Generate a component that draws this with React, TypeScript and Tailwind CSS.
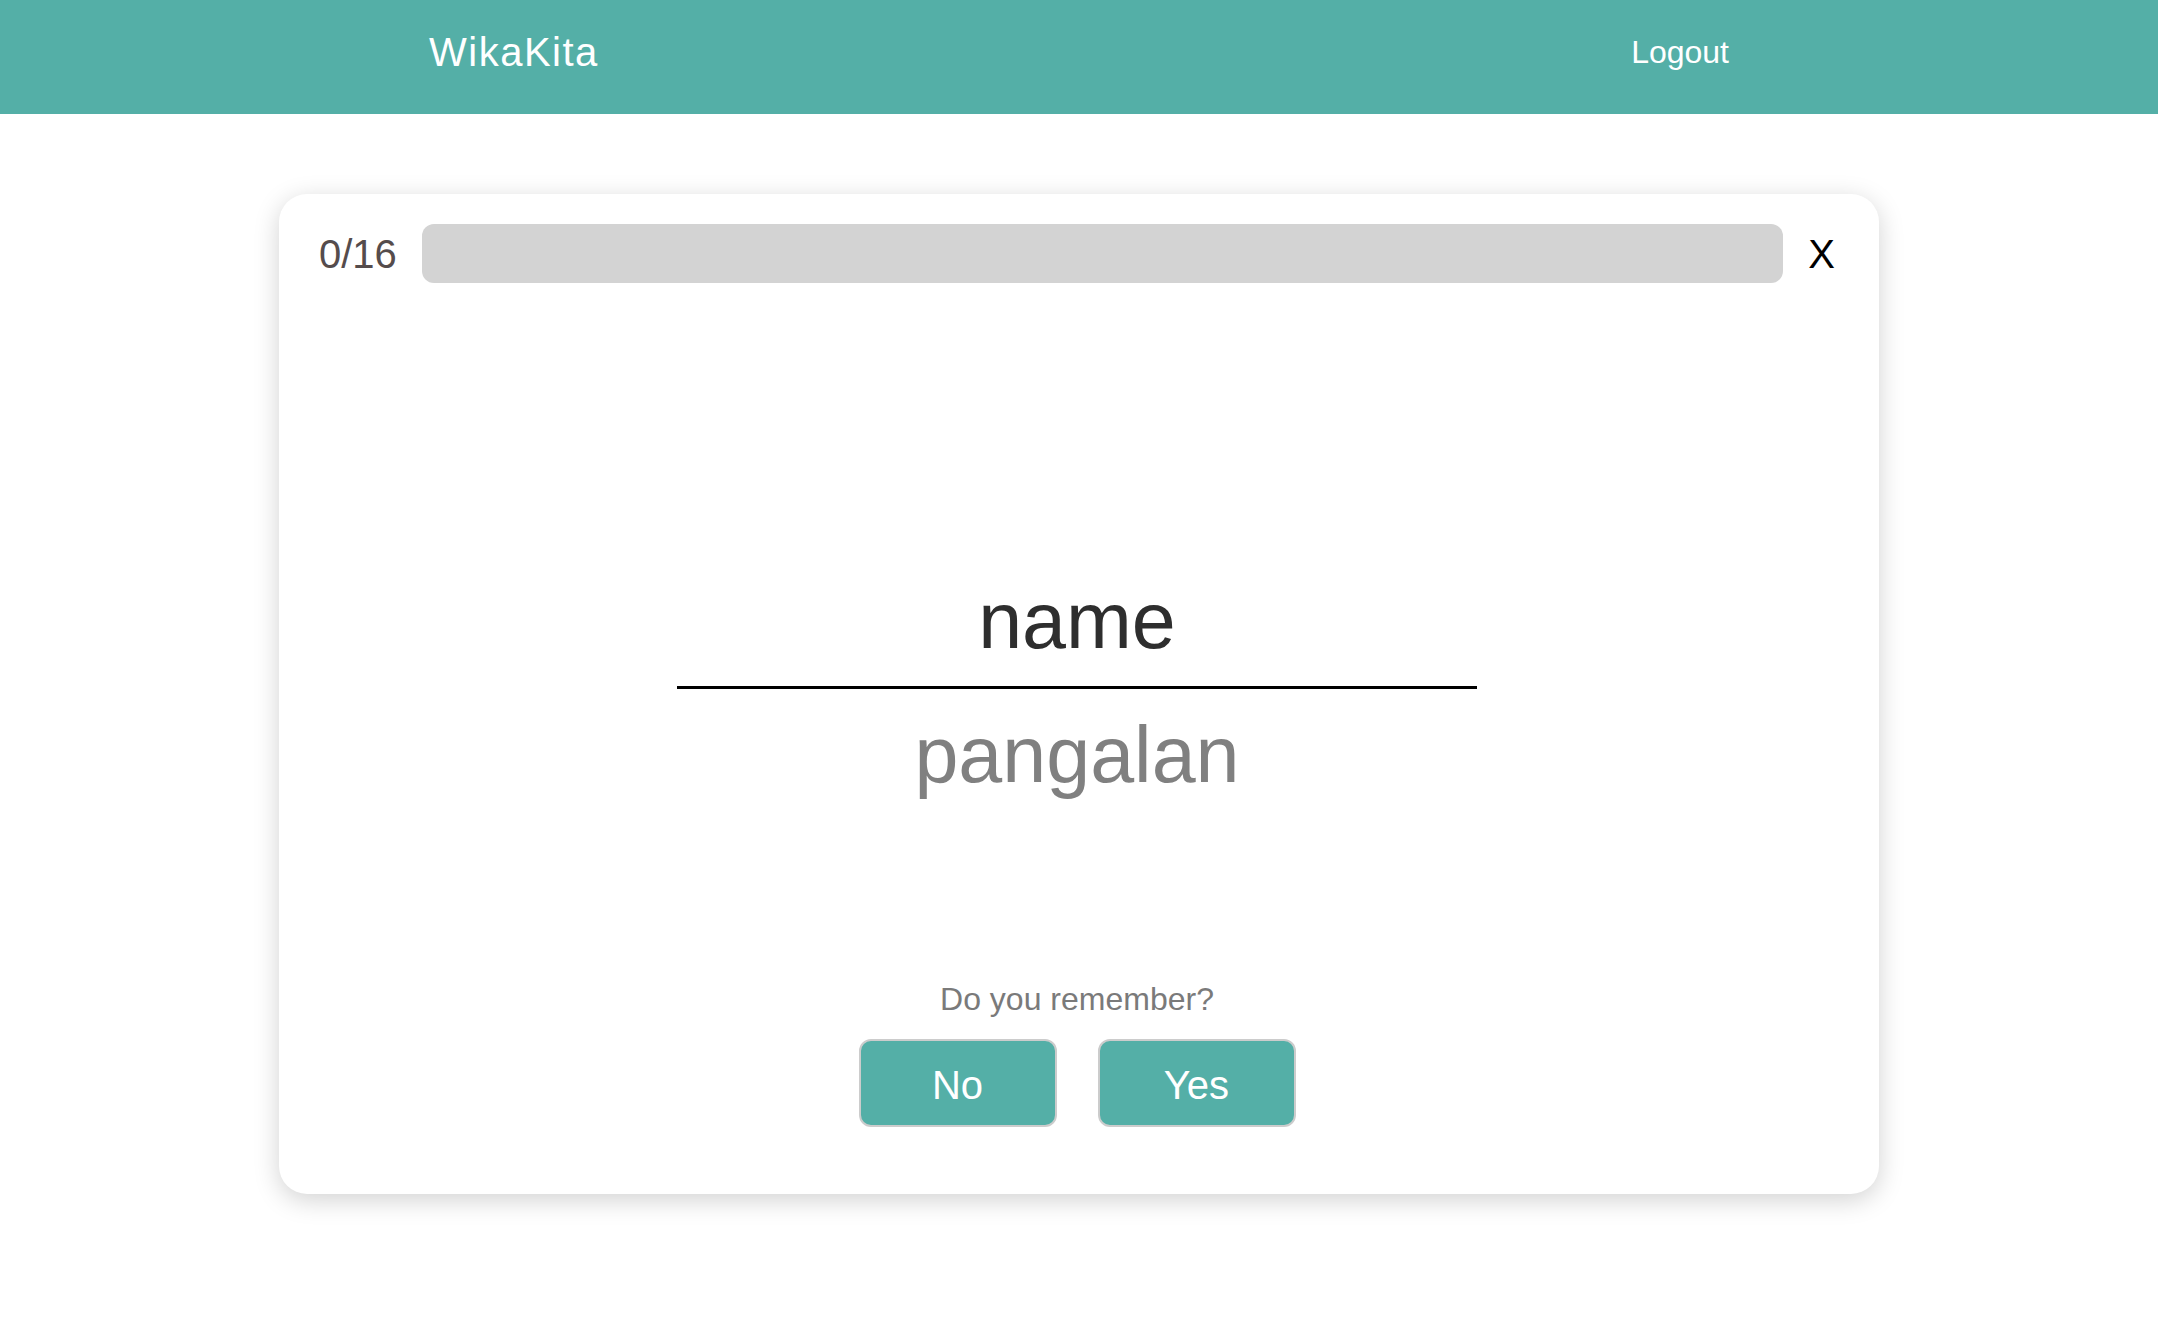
import React from "react";

export default function App() {
  return (
    <div
      className="min-h-[1344px] w-full bg-white"
      style={{ fontFamily: '"Liberation Sans", Arial, Helvetica, sans-serif' }}
    >
      <header className="h-[114px] w-full bg-[#54afa7] pb-[10px]">
        <div className="mx-auto flex h-full max-w-[1300px] items-center justify-between">
          <div className="text-[40px] leading-none tracking-[1.5px] text-white">WikaKita</div>
          <button className="text-[32px] leading-none text-white">Logout</button>
        </div>
      </header>

      <main className="pt-[80px]">
        <div className="mx-auto flex h-[1000px] w-[1600px] flex-col items-center rounded-[28px] bg-white pb-[67px] pl-[40px] pr-[44px] pt-[30px] shadow-[0_6px_26px_rgba(0,0,0,0.18)]">
          <div className="flex h-[59px] w-full items-center gap-[25px]">
            <div className="text-[40px] leading-none text-[#554c4c]">0/16</div>
            <div className="h-[59px] flex-1 rounded-[12px] bg-[#d3d3d3]" />
            <button className="text-[40px] leading-none text-black">X</button>
          </div>

          <div className="mt-[298px] flex flex-col items-center">
            <div className="text-[79px] leading-none text-[#2e2e2e]">name</div>
            <div className="mt-[26px] h-[3px] w-[800px] bg-black" />
            <div className="mt-[26px] text-[79px] leading-none text-[#808080]">pangalan</div>
          </div>

          <div className="mt-auto flex flex-col items-center">
            <div className="text-[32px] leading-none text-[#7a7a7a]">Do you remember?</div>
            <div className="mt-[24px] flex gap-[41px]">
              <button className="flex h-[88px] w-[198px] items-center justify-center rounded-[12px] border-2 border-[#cccccc] bg-[#54afa7] pt-[3px] text-[40px] leading-none text-white">
                No
              </button>
              <button className="flex h-[88px] w-[198px] items-center justify-center rounded-[12px] border-2 border-[#cccccc] bg-[#54afa7] pt-[3px] text-[40px] leading-none text-white">
                Yes
              </button>
            </div>
          </div>
        </div>
      </main>
    </div>
  );
}
